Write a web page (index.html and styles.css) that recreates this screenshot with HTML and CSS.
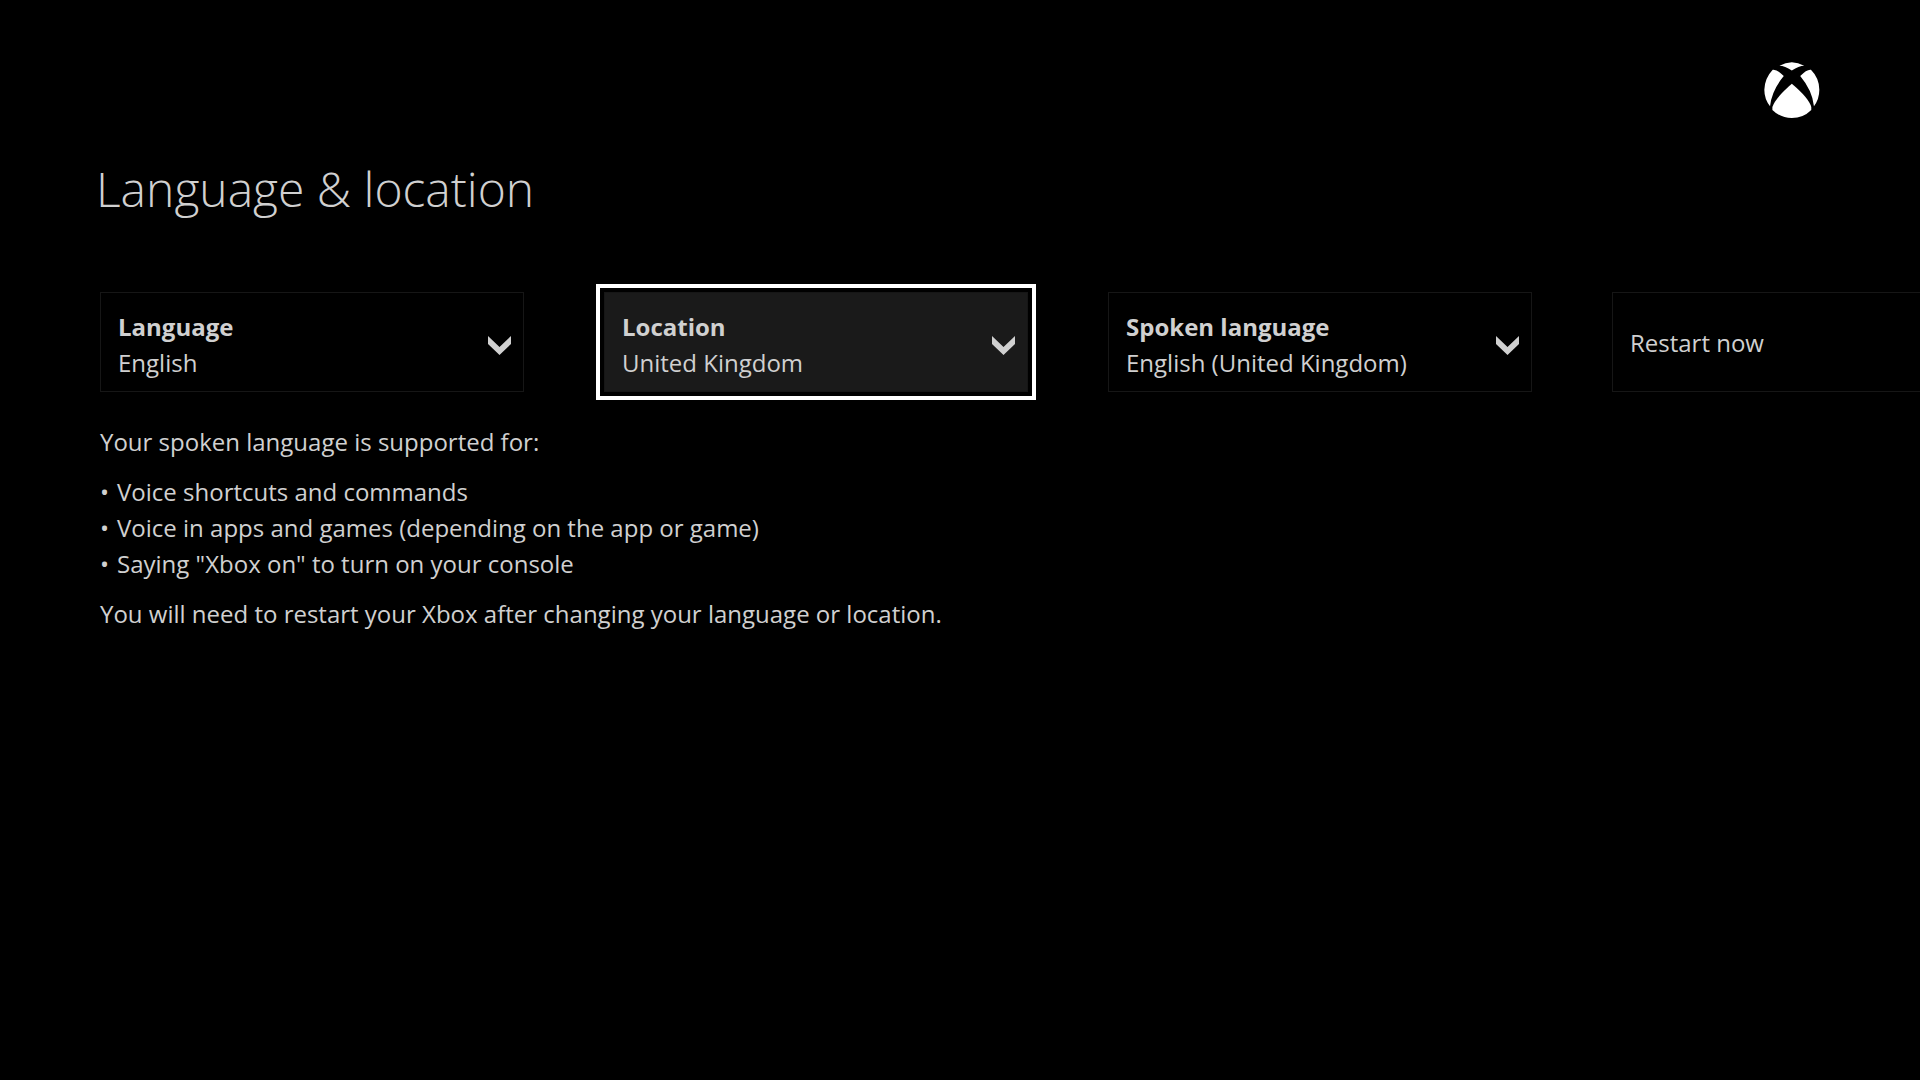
FILE: index.html
```html
<!DOCTYPE html>
<html lang="en">
<head>
	<meta charset="UTF-8">
	<meta name="viewport" content="width=device-width, initial-scale=1">
	<title>Language &amp; location</title>
	<link rel="stylesheet" href="styles.css">
</head>
<body>
	<header class="topbar">
		<svg class="logo" viewBox="74 66 165 167" role="img" aria-label="Xbox">
			<path d="M119 77 Q156 56 193 77 Q177 77 156 91 Q135 77 119 77Z"/>
			<path d="M99 89 Q112 87 132 108 Q96 151 91 198 Q74 177 74 149 Q75 114 99 89Z"/>
			<path d="M213 89 Q201 87 181 108 Q217 151 222 198 Q238 177 238 149 Q238 114 213 89Z"/>
			<path d="M156 131 Q206 173 214 200 L214 209 Q190 233 156 233 Q122 233 98 209 L98 200 Q107 173 156 131Z"/>
		</svg>
	</header>
	<main class="page">
		<h1>Language &amp; location</h1>
		<div class="content">
			<form class="options">
				<div class="option">
					<label for="language">Language</label>
					<select id="language">
						<option>English</option>
					</select>
					<svg class="chevron" viewBox="0 0 23 19"><path d="M0 0 L11.5 11 L23 0 V8 L11.5 19 L0 8Z"/></svg>
				</div>
				<div class="option active">
					<label for="location">Location</label>
					<select id="location">
						<option>United Kingdom</option>
					</select>
					<svg class="chevron" viewBox="0 0 23 19"><path d="M0 0 L11.5 11 L23 0 V8 L11.5 19 L0 8Z"/></svg>
				</div>
				<div class="option">
					<label for="spoken">Spoken language</label>
					<select id="spoken">
						<option>English (United Kingdom)</option>
					</select>
					<svg class="chevron" viewBox="0 0 23 19"><path d="M0 0 L11.5 11 L23 0 V8 L11.5 19 L0 8Z"/></svg>
				</div>
				<button type="button" class="restart">Restart now</button>
			</form>
			<div class="info">
				<p>Your spoken language is supported for:</p>
				<ul>
					<li>Voice shortcuts and commands</li>
					<li>Voice in apps and games (depending on the app or game)</li>
					<li>Saying "Xbox on" to turn on your console</li>
				</ul>
				<p>You will need to restart your Xbox after changing your language or location.</p>
			</div>
		</div>
	</main>
</body>
</html>
```
FILE: styles.css
```css
* {
	box-sizing: border-box;
}
body {
	margin: 0;
	background-color: #000;
	color: #d0d0d0;
	font-family: "Open Sans", "Noto Sans", sans-serif;
	font-size: 24px;
	line-height: 36px;
	overflow-x: hidden;
}
.topbar {
	display: flex;
	justify-content: flex-end;
	padding: 62px 100px 0;
}
.logo {
	width: 56px;
	height: 56px;
	fill: #fff;
}
.page {
	padding: 39px 0 0 96px;
}
h1 {
	margin: 0;
	font-size: 48px;
	font-weight: 300;
	line-height: 64px;
}
.content {
	padding: 71px 0 0 4px;
}
/* the row scrolls off the right side of the screen */
.options {
	display: flex;
	gap: 80px;
}
.option,
.restart {
	flex: none;
	width: 424px;
	height: 100px;
	border: 1px solid #161616;
	background-color: #000;
}
.option {
	display: grid;
	grid-template-columns: 1fr 23px;
	align-content: start;
	padding: 16px 12px 0 17px;
}
.option.active {
	background-color: #1a1a1a;
	outline: 4px solid #fff;
	outline-offset: 4px;
}
.option label {
	grid-area: 1 / 1;
	font-weight: bold;
}
.option select {
	grid-area: 2 / 1;
	height: 36px;
	padding: 0;
	border: 0;
	appearance: none;
	background: none;
	color: inherit;
	font: inherit;
	outline: none;
}
.chevron {
	grid-area: 1 / 2 / 3 / 3;
	align-self: center;
	width: 23px;
	height: 19px;
	fill: #d0d0d0;
}
.restart {
	padding: 2px 17px 0;
	color: inherit;
	font: inherit;
	text-align: left;
}
.info {
	padding-top: 32px;
}
.info p,
.info ul {
	margin: 0 0 14px;
}
.info ul {
	padding: 0;
	list-style: none;
}
.info li::before {
	content: "•";
	margin-right: 8px;
}
```
